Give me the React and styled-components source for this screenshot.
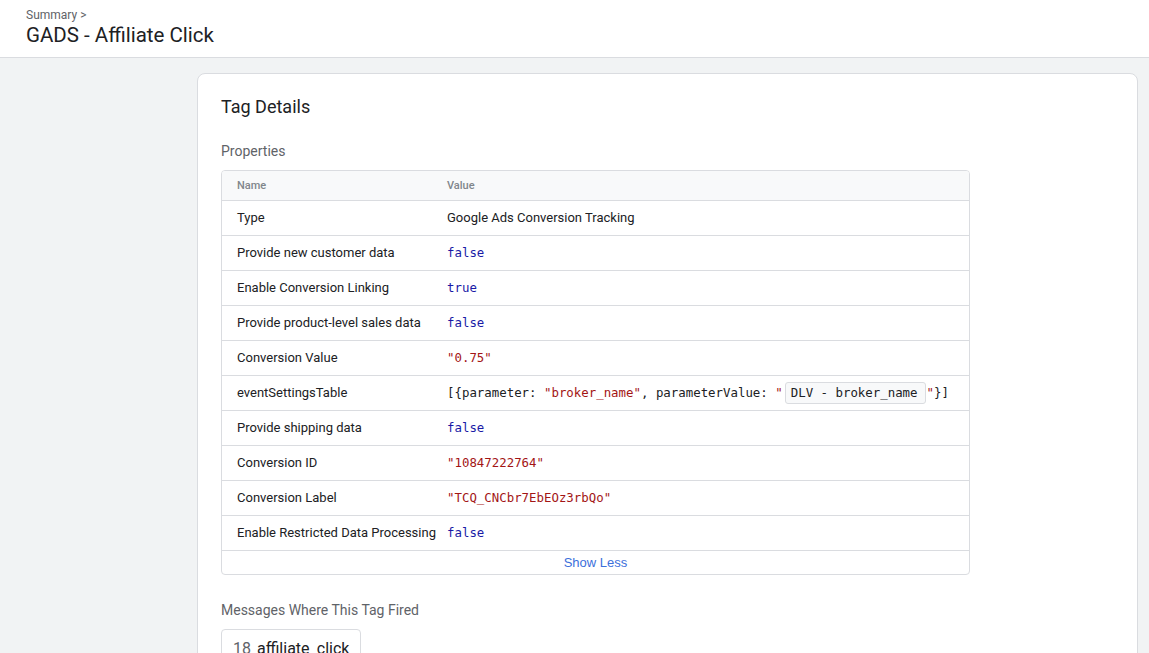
import React from "react";
import styled, { createGlobalStyle } from "styled-components";

const GlobalStyle = createGlobalStyle`
  html, body {
    margin: 0;
    padding: 0;
    height: 100%;
    overflow: hidden;
    background: #f1f3f4;
    font-family: Roboto, "Noto Sans", Arial, sans-serif;
    color: #202124;
  }
`;

const Header = styled.header`
  background: #fff;
  border-bottom: 1px solid #dadce0;
  height: 58px;
  box-sizing: border-box;
  padding: 8px 26px 0;
`;

const Crumb = styled.div`
  font-size: 12px;
  color: #5f6368;
  line-height: 14px;
`;

const Title = styled.h1`
  margin: 0;
  font-size: 20.5px;
  font-weight: 400;
  line-height: 26px;
  color: #202124;
`;

const Main = styled.main`
  padding: 15px 11px 0 197px;
`;

const Card = styled.section`
  background: #fff;
  border: 1px solid #dadce0;
  border-radius: 8px;
  padding: 22px 23px 40px;
  min-height: 700px;
`;

const CardTitle = styled.h2`
  margin: 0;
  font-size: 18px;
  font-weight: 400;
  line-height: 22px;
  color: #202124;
`;

const SectionLabel = styled.h3`
  margin: ${(p) => p.$top}px 0 10px;
  font-size: 14px;
  font-weight: 400;
  line-height: 18px;
  color: #5f6368;
`;

const Table = styled.div`
  width: 747px;
  border: 1px solid #dadce0;
  border-radius: 4px;
  overflow: hidden;
`;

const Row = styled.div`
  display: grid;
  grid-template-columns: 210px 1fr;
  align-items: center;
  height: ${(p) => (p.$head ? 29 : 33)}px;
  padding: 0 0 ${(p) => (p.$head ? 0 : 1)}px 15px;
  border-bottom: 1px solid #dadce0;
  background: ${(p) => (p.$head ? "#f8f9fa" : "#fff")};
  font-size: ${(p) => (p.$head ? 11 : 13)}px;
  color: ${(p) => (p.$head ? "#80868b" : "#202124")};
  font-weight: ${(p) => (p.$head ? 500 : 400)};
`;

const Code = styled.span`
  font-family: "DejaVu Sans Mono", "Liberation Mono", monospace;
  font-size: 12.4px;
  color: #202124;
  white-space: pre;
`;

const Keyword = styled.span`
  color: #1a1aa6;
`;

const Str = styled.span`
  color: #a31515;
`;

const VarChip = styled.span`
  display: inline-block;
  background: #f8f9fa;
  border: 1px solid #dadce0;
  border-radius: 3px;
  padding: 3px 7px 3px 5px;
  margin: 0 1px 0 2px;
  line-height: 14px;
`;

const ShowLess = styled.div`
  height: 23px;
  display: flex;
  align-items: center;
  justify-content: center;
  font-family: "Liberation Sans", Arial, sans-serif;
  font-size: 13px;
  color: #3c6fdb;
  cursor: pointer;
`;

const Message = styled.div`
  display: inline-flex;
  align-items: baseline;
  gap: 6px;
  border: 1px solid #dadce0;
  border-radius: 4px;
  padding: 9px 11px;
  font-size: 16px;
`;

const MsgNum = styled.span`
  color: #5f6368;
`;

const rows = [
  ["Type", <span>Google Ads Conversion Tracking</span>],
  ["Provide new customer data", <Code><Keyword>false</Keyword></Code>],
  ["Enable Conversion Linking", <Code><Keyword>true</Keyword></Code>],
  ["Provide product-level sales data", <Code><Keyword>false</Keyword></Code>],
  ["Conversion Value", <Code><Str>"0.75"</Str></Code>],
  [
    "eventSettingsTable",
    <Code>
      {"[{parameter: "}
      <Str>"broker_name"</Str>
      {", parameterValue: "}
      <Str>"</Str>
      <VarChip>DLV - broker_name</VarChip>
      <Str>"</Str>
      {"}]"}
    </Code>,
  ],
  ["Provide shipping data", <Code><Keyword>false</Keyword></Code>],
  ["Conversion ID", <Code><Str>"10847222764"</Str></Code>],
  ["Conversion Label", <Code><Str>"TCQ_CNCbr7EbEOz3rbQo"</Str></Code>],
  ["Enable Restricted Data Processing", <Code><Keyword>false</Keyword></Code>],
];

export default function App() {
  return (
    <>
      <GlobalStyle />
      <Header>
        <Crumb>Summary &gt;</Crumb>
        <Title>GADS - Affiliate Click</Title>
      </Header>
      <Main>
        <Card>
          <CardTitle>Tag Details</CardTitle>
          <SectionLabel $top={24}>Properties</SectionLabel>
          <Table>
            <Row $head>
              <span>Name</span>
              <span>Value</span>
            </Row>
            {rows.map(([name, value]) => (
              <Row key={name}>
                <span>{name}</span>
                {value}
              </Row>
            ))}
            <ShowLess>Show Less</ShowLess>
          </Table>
          <SectionLabel $top={26}>Messages Where This Tag Fired</SectionLabel>
          <Message>
            <MsgNum>18</MsgNum>
            <span>affiliate_click</span>
          </Message>
        </Card>
      </Main>
    </>
  );
}
